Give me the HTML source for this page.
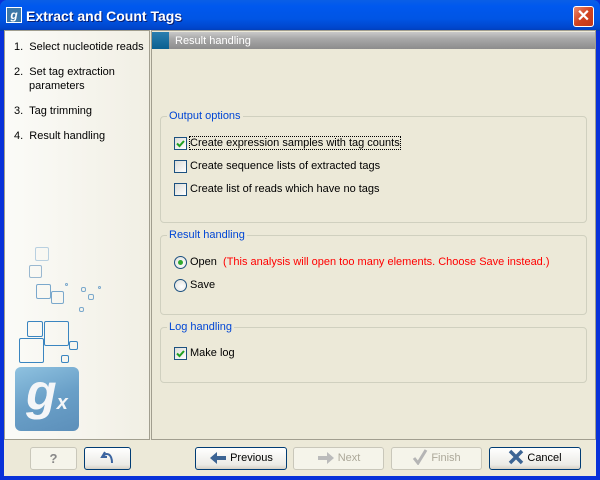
<!DOCTYPE html>
<html><head><meta charset="utf-8"><style>
*{margin:0;padding:0;box-sizing:border-box}
body{width:600px;height:480px;overflow:hidden;background:#0831d9;font-family:Tahoma,"Liberation Sans",sans-serif;font-size:11px;color:#000;position:relative}
.abs{position:absolute}
#title{left:0;top:0;width:600px;height:31px;background:linear-gradient(#0a5fe6,#0058ee 20%,#0055e5 60%,#0046cc 90%,#003cb4);border-radius:7px 7px 0 0}
#title .t{left:26px;top:8px;color:#fff;font-weight:bold;font-size:14px;text-shadow:1px 1px 0 #0a1e70}
#body{left:4px;top:30px;width:592px;height:446px;background:#ece9d8}
#left{left:4px;top:30px;width:146px;height:410px;background:linear-gradient(90deg,#fbfbf8,#f1efe4);border:1px solid #a19e8f}
#right{left:151px;top:30px;width:445px;height:410px;border:1px solid #a19e8f;background:#ece9d8}
#hdr{left:152px;top:32px;width:443px;height:17px;background:linear-gradient(#c9c9c9,#a8a8a8 40%,#8c8c8c);color:#fff;font-size:11px}
#hdr .b{left:0;top:0;width:17px;height:17px;background:linear-gradient(#2b7fb0,#0a5f90)}
.step{left:14px;color:#000}
.grp{border:1px solid #d0d0bf;border-radius:4px}
.gt{color:#0046d5;background:#ece9d8;padding:0 2px}
.cb{width:13px;height:13px;border:1px solid #1c5180;background:linear-gradient(135deg,#dcdcd7,#fff)}
.rb{width:13px;height:13px;border:1px solid #1c5180;border-radius:50%;background:radial-gradient(circle at 60% 60%,#fff,#dcdcd7)}
.btn{height:23px;border:1px solid #003c74;border-radius:3px;background:linear-gradient(#fff,#ecebe6 80%,#d6d0c5);text-align:center;line-height:21px}
.btn svg{vertical-align:-4px;margin-right:3px}
.dis{border-color:#c9c7ba;color:#aca899;background:#f5f4ea}
.sq{position:absolute;border:1.3px solid #3a85c0;border-radius:2px}
</style></head><body>
<div id="title" class="abs">
 <div class="abs" style="left:6px;top:7px;width:16px;height:16px;background:#3d78a8;border:1px solid #fff;color:#fff;font-weight:bold;font-style:italic;font-size:12px;text-align:center;line-height:14px">g</div>
 <div class="abs t">Extract and Count Tags</div>
 <div class="abs" style="left:573px;top:6px;width:21px;height:21px;background:linear-gradient(135deg,#e98b6f,#d2421f 50%,#c0371a);border:1px solid #fff;border-radius:3px;color:#fff;font-size:16px;font-weight:bold;text-align:center;line-height:19px">✕</div>
</div>
<div id="body" class="abs"></div>
<div id="left" class="abs"></div>
<div class="abs step" style="top:41px">1.&nbsp; Select nucleotide reads</div>
<div class="abs step" style="top:66px">2.&nbsp; Set tag extraction</div>
<div class="abs step" style="top:80px;left:29px">parameters</div>
<div class="abs step" style="top:105px">3.&nbsp; Tag trimming</div>
<div class="abs step" style="top:130px">4.&nbsp; Result handling</div>
<div class="abs" style="left:0;top:230px;width:150px;height:210px">
 <div class="sq" style="left:35px;top:17px;width:14px;height:14px;border-color:#b8d0e0"></div>
 <div class="sq" style="left:29px;top:35px;width:13px;height:13px;border-color:#9ab8d0"></div>
 <div class="sq" style="left:36px;top:54px;width:15px;height:15px;border-color:#7aa8cc"></div>
 <div class="sq" style="left:51px;top:61px;width:13px;height:13px;border-color:#7aa8cc"></div>
 <div class="sq" style="left:65px;top:53px;width:3px;height:3px;border-color:#7aa8cc"></div>
 <div class="sq" style="left:81px;top:57px;width:5px;height:5px;border-color:#7aa8cc"></div>
 <div class="sq" style="left:88px;top:64px;width:6px;height:6px;border-color:#7aa8cc"></div>
 <div class="sq" style="left:98px;top:56px;width:3px;height:3px;border-color:#7aa8cc"></div>
 <div class="sq" style="left:79px;top:77px;width:5px;height:5px;border-color:#7aa8cc"></div>
 <div class="sq" style="left:27px;top:91px;width:16px;height:16px"></div>
 <div class="sq" style="left:44px;top:91px;width:25px;height:25px"></div>
 <div class="sq" style="left:19px;top:108px;width:25px;height:25px"></div>
 <div class="sq" style="left:69px;top:111px;width:9px;height:9px"></div>
 <div class="sq" style="left:61px;top:125px;width:8px;height:8px"></div>
 <div class="abs" style="left:15px;top:137px;width:64px;height:64px;border-radius:6px;background:linear-gradient(160deg,#8fc2e0,#6aa0c8 50%,#5c8fba);color:#f4f6f8;font-weight:bold;font-style:italic;font-size:50px;line-height:50px;text-align:center;font-family:'Liberation Sans',sans-serif">g<span style="font-size:20px">x</span></div>
</div>
<div id="right" class="abs"></div>
<div id="hdr" class="abs"><div class="abs b"></div><div class="abs" style="left:23px;top:3px">Result handling</div></div>

<div class="abs grp" style="left:160px;top:116px;width:427px;height:107px"></div>
<div class="abs gt" style="left:167px;top:110px">Output options</div>
<div class="abs cb" style="left:174px;top:137px"><svg width="11" height="11" style="position:absolute;left:0;top:0"><path d="M2 5.5l2.5 2.5 4.5-5" stroke="#21a121" stroke-width="2" fill="none"/></svg></div>
<div class="abs" style="left:190px;top:137px;outline:1px dotted #000">Create expression samples with tag counts</div>
<div class="abs cb" style="left:174px;top:160px"></div>
<div class="abs" style="left:190px;top:160px">Create sequence lists of extracted tags</div>
<div class="abs cb" style="left:174px;top:183px"></div>
<div class="abs" style="left:190px;top:183px">Create list of reads which have no tags</div>

<div class="abs grp" style="left:160px;top:235px;width:427px;height:80px"></div>
<div class="abs gt" style="left:167px;top:229px">Result handling</div>
<div class="abs rb" style="left:174px;top:256px"><div class="abs" style="left:3px;top:3px;width:5px;height:5px;border-radius:50%;background:#2fa82f"></div></div>
<div class="abs" style="left:190px;top:256px">Open&nbsp; <span style="color:#f00">(This analysis will open too many elements. Choose Save instead.)</span></div>
<div class="abs rb" style="left:174px;top:279px"></div>
<div class="abs" style="left:190px;top:279px">Save</div>

<div class="abs grp" style="left:160px;top:327px;width:427px;height:56px"></div>
<div class="abs gt" style="left:167px;top:321px">Log handling</div>
<div class="abs cb" style="left:174px;top:347px"><svg width="11" height="11" style="position:absolute;left:0;top:0"><path d="M2 5.5l2.5 2.5 4.5-5" stroke="#21a121" stroke-width="2" fill="none"/></svg></div>
<div class="abs" style="left:190px;top:347px">Make log</div>

<div class="abs btn dis" style="left:30px;top:447px;width:47px;font-weight:bold;color:#888;font-size:13px">?</div>
<div class="abs btn" style="left:84px;top:447px;width:47px"><svg width="16" height="16" style="margin:0;vertical-align:-4px"><path d="M5 3L2 8l5 0M3 7c4-4 9-2 9 7" stroke="#3c64a0" stroke-width="2" fill="none"/></svg></div>
<div class="abs btn" style="left:195px;top:447px;width:92px"><svg width="18" height="14"><path d="M1 7l7-6v4h9v4H8v4z" fill="#3c6494"/></svg>Previous</div>
<div class="abs btn dis" style="left:293px;top:447px;width:91px"><svg width="18" height="14"><path d="M17 7l-7-6v4H1v4h9v4z" fill="#bbb"/></svg>Next</div>
<div class="abs btn dis" style="left:391px;top:447px;width:91px"><svg width="16" height="16"><path d="M2 9l4 5 8-13" stroke="#b5b5b5" stroke-width="3" fill="none"/></svg>Finish</div>
<div class="abs btn" style="left:489px;top:447px;width:92px"><svg width="16" height="16"><path d="M2 2l12 12M14 2L2 14" stroke="#3c6494" stroke-width="3.5"/></svg>Cancel</div>
</body></html>
